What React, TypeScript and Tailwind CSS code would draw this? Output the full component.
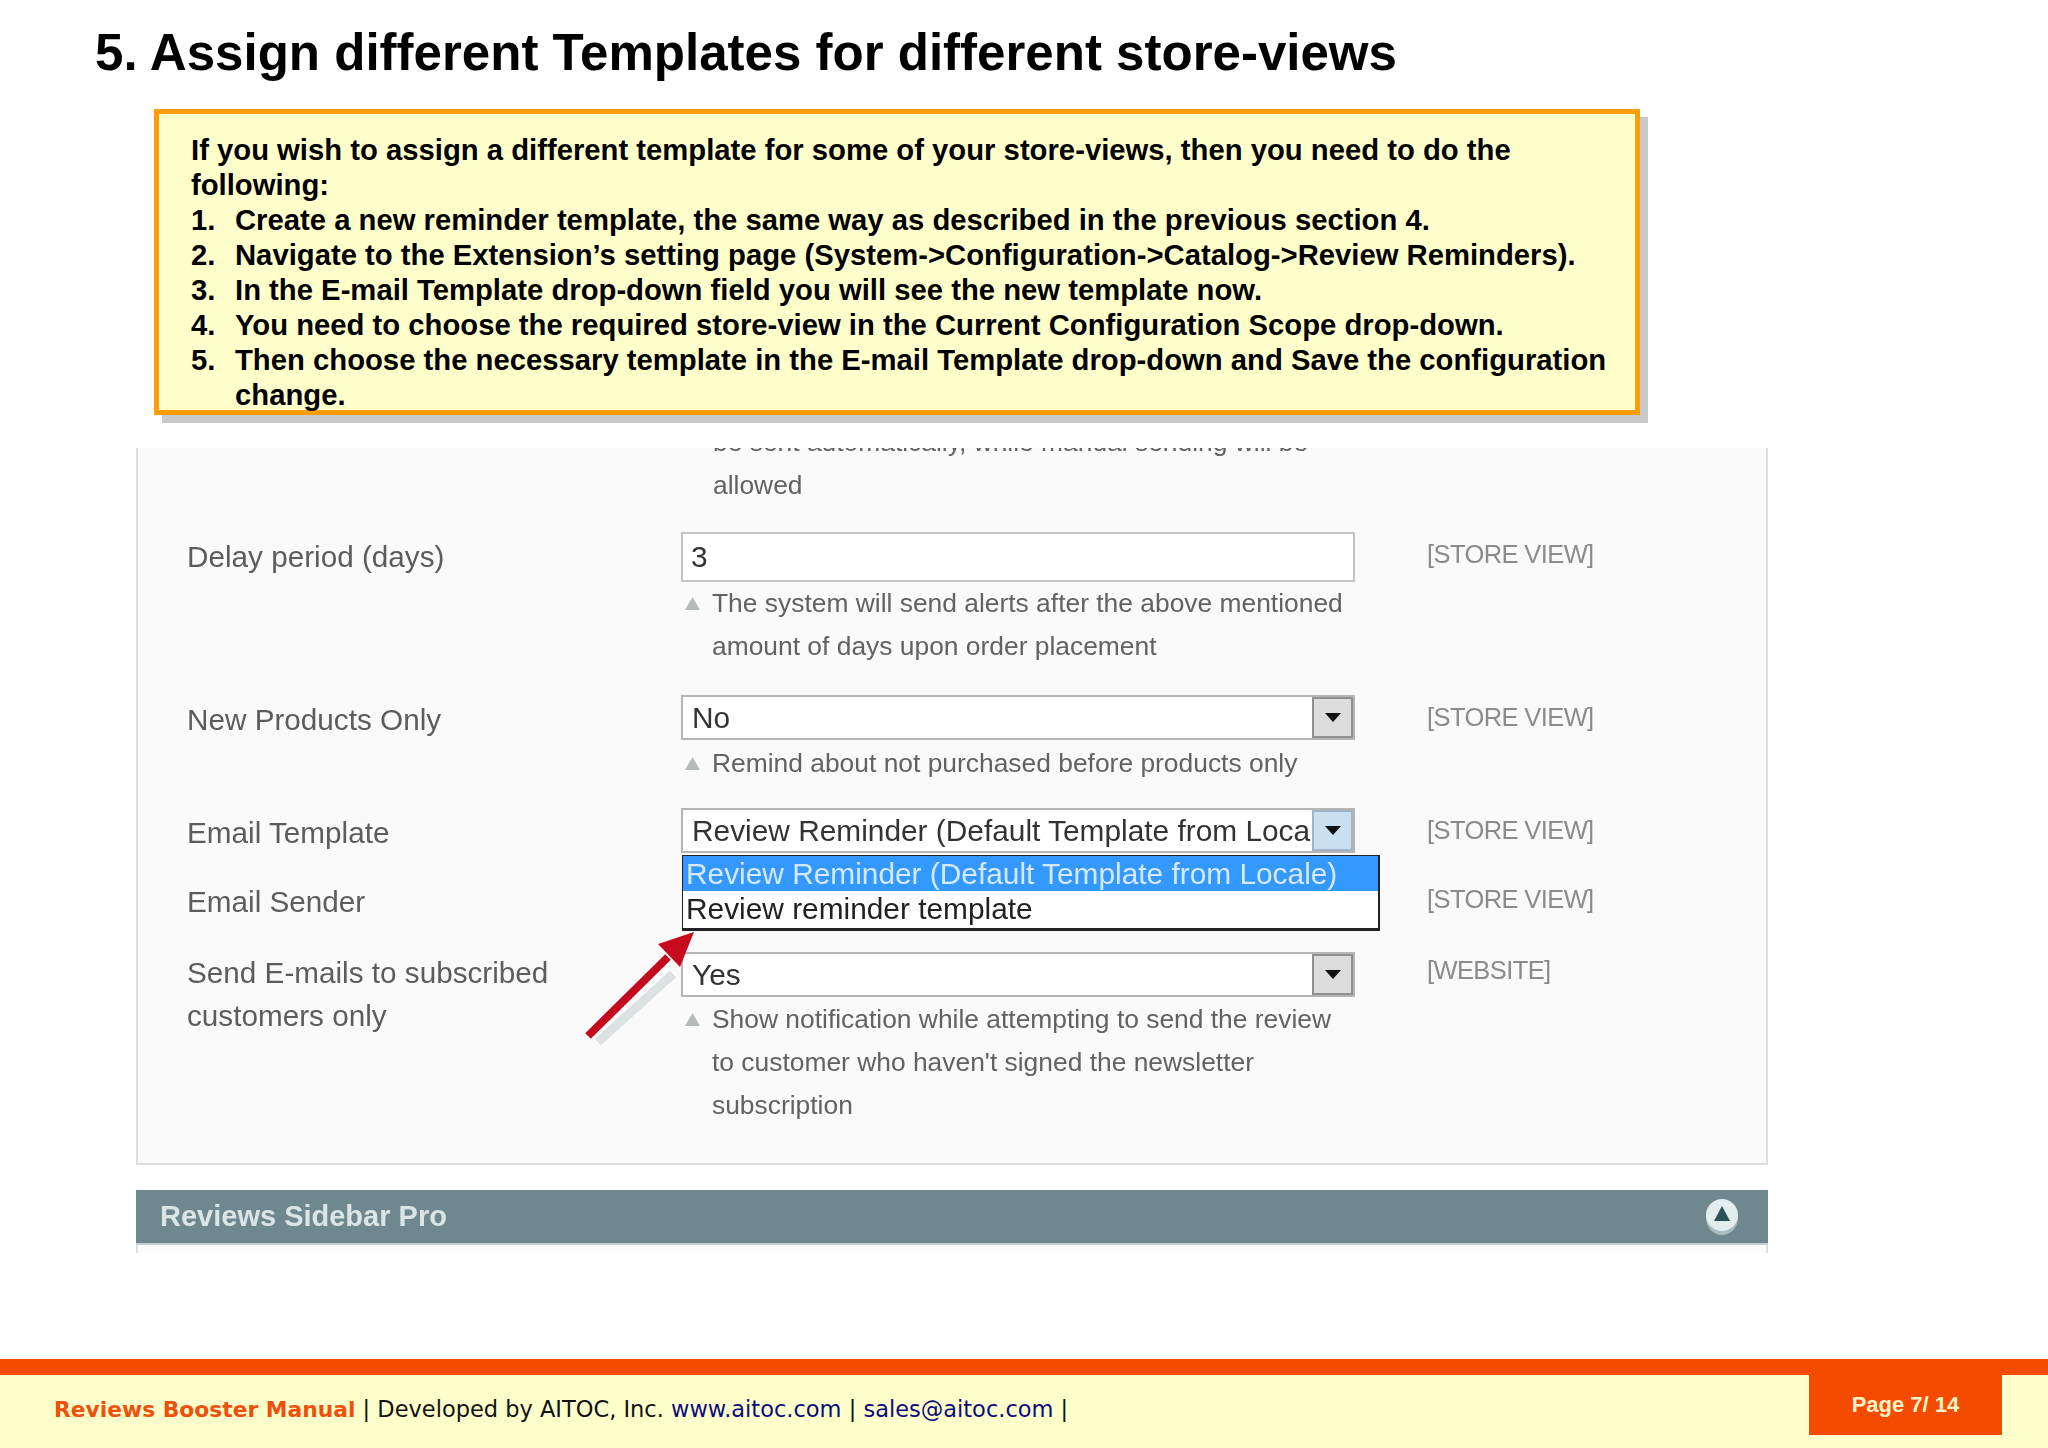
const steps = [
  ["Create a new reminder template, the same way as described in the previous section 4."],
  ["Navigate to the Extension’s setting page (System->Configuration->Catalog->Review Reminders)."],
  ["In the E-mail Template drop-down field you will see the new template now."],
  ["You need to choose the required store-view in the Current Configuration Scope drop-down."],
  ["Then choose the necessary template in the E-mail Template drop-down and Save the configuration", "change."],
];

function Note({ lines, top }: { lines: string[]; top: string }) {
  return (
    <div className={`flex ${top}`}>
      <svg className="mt-[15px] mr-[12px] ml-[4px] h-[13px] w-[15px] shrink-0" viewBox="0 0 15 13" aria-hidden>
        <path d="M7.5 0L15 13H0z" fill="#b4bcbc" />
      </svg>
      <div className="text-[26.4px] leading-[43px] text-[#626262]">
        {lines.map((l) => (
          <div key={l} className="whitespace-nowrap">{l}</div>
        ))}
      </div>
    </div>
  );
}

function Select({ value, focused }: { value: string; focused?: boolean }) {
  return (
    <div className="flex h-[45px] w-[674px] items-center justify-between border-2 border-[#b5b5b5] bg-white">
      <span className="pt-[2px] pl-[9px] text-[29.85px] whitespace-nowrap text-[#333]">{value}</span>
      <span className={`flex h-full w-[41px] items-center justify-center border-2 ${focused ? "border-[#9fb4c6] bg-[#c9e0f2]" : "border-[#8f8f8f] bg-[#dcdcdc]"}`}>
        <svg className="h-[9px] w-[16px]" viewBox="0 0 16 9" aria-hidden>
          <path d="M0 0h16L8 9z" fill="#111" />
        </svg>
      </span>
    </div>
  );
}

function Row({ label, scope, top, children }: { label: string[]; scope: string; top: string; children?: React.ReactNode }) {
  return (
    <div className={`grid grid-cols-[494px_746px_1fr] ${top}`}>
      <div className="pt-[3px] text-[29.7px] leading-[43px] text-[#5c5c5c]">
        {label.map((l) => (
          <div key={l}>{l}</div>
        ))}
      </div>
      <div>{children}</div>
      <div className="pt-[3px] text-[25.5px] leading-[38px] tracking-[-0.6px] text-[#8b8b8b]">{scope}</div>
    </div>
  );
}

export default function App() {
  return (
    <div className="flex h-[1448px] w-[2048px] flex-col overflow-hidden bg-white font-['Liberation_Sans',sans-serif] text-black">
      <h1 className="mt-[23px] ml-[95px] text-[51.05px] leading-[60px] font-bold">
        5. Assign different Templates for different store-views
      </h1>

      <div className="mt-[26px] ml-[154px] h-[306px] w-[1486px] border-[5px] border-[#ff9c0a] bg-[#ffffcc] pt-[19px] pl-[32px] text-[29.25px] leading-[35px] font-bold shadow-[8px_8px_0_#c9c9c9]">
        <p>If you wish to assign a different template for some of your store-views, then you need to do the</p>
        <p>following:</p>
        <ol>
          {steps.map((lines, i) => (
            <li key={lines[0]} className="flex">
              <span className="w-[44px] shrink-0">{i + 1}.</span>
              <span className="whitespace-nowrap">
                {lines.map((l) => (
                  <div key={l}>{l}</div>
                ))}
              </span>
            </li>
          ))}
        </ol>
      </div>

      <div className="relative mt-[33px] ml-[136px] w-[1632px]">
        <section className="h-[717px] border-2 border-t-0 border-[#dcdfe0] bg-[#fafafa] pl-[49px] blur-[0.4px]">
          <div className="ml-[526px] h-[14px] overflow-hidden">
            <div className="-mt-[27px] text-[26.4px] leading-[43px] whitespace-nowrap text-[#626262]">
              be sent automatically, while manual sending will be
            </div>
          </div>
          <div className="ml-[526px] pt-[2px] text-[26.4px] leading-[43px] text-[#626262]">allowed</div>

          <Row label={["Delay period (days)"]} scope="[STORE VIEW]" top="mt-[25px]">
            <div className="flex h-[50px] w-[674px] items-center border-2 border-[#c4c4c4] bg-white pl-[8px] text-[29.85px] text-[#333]">3</div>
            <Note top="mt-0" lines={["The system will send alerts after the above mentioned", "amount of days upon order placement"]} />
          </Row>

          <Row label={["New Products Only"]} scope="[STORE VIEW]" top="mt-[27px]">
            <Select value="No" />
            <Note top="mt-[2px]" lines={["Remind about not purchased before products only"]} />
          </Row>

          <Row label={["Email Template"]} scope="[STORE VIEW]" top="mt-[23px]">
            <Select value="Review Reminder (Default Template from Loca" focused />
          </Row>

          <Row label={["Email Sender"]} scope="[STORE VIEW]" top="mt-[23px]" />

          <Row label={["Send E-mails to subscribed", "customers only"]} scope="[WEBSITE]" top="mt-[25px]">
            <div className="mt-[4px]">
              <Select value="Yes" />
            </div>
            <Note top="mt-[1px]" lines={["Show notification while attempting to send the review", "to customer who haven't signed the newsletter", "subscription"]} />
          </Row>
        </section>

        <div className="mt-[25px] flex h-[55px] items-center justify-between border-b-2 border-[#c2cfd3] bg-[#6f878f] pr-[29px] pl-[24px] text-[29px] font-bold text-[#dbe5e6] blur-[0.4px]">
          <span>Reviews Sidebar Pro</span>
          <svg className="h-[38px] w-[34px]" viewBox="0 0 34 38" aria-hidden>
            <ellipse cx="17" cy="20" rx="16" ry="17" fill="#a9bcc0" />
            <circle cx="17" cy="17" r="16" fill="#e3edee" />
            <path d="M17 8l8 15H9z" fill="#2d5158" />
          </svg>
        </div>
        <div className="h-[8px] border-x-2 border-[#dcdfe0] bg-[#fdfdfd]" />

        {/* open drop-down list of the Email Template select */}
        <div className="absolute top-[407px] left-[546px] h-[76px] w-[698px] border border-r-2 border-b-[3px] border-[#222] bg-white text-[29.85px] leading-[36px] whitespace-nowrap blur-[0.4px]">
          <div className="h-[35px] bg-[#3399ff] pl-[3px] text-[#d6e8fb]">Review Reminder (Default Template from Locale)</div>
          <div className="pl-[3px] text-[#222]">Review reminder template</div>
        </div>

        {/* red callout arrow */}
        <svg className="absolute top-[480px] left-[440px] h-[125px] w-[130px] blur-[0.6px]" viewBox="0 0 130 125" aria-hidden>
          <path d="M22 114L97 46" stroke="#cfd6d6" strokeWidth="9" opacity="0.7" />
          <path d="M12 108L92 29" stroke="#c40a1e" strokeWidth="8" />
          <path d="M118 4L82 16L104 39z" fill="#c80a1e" />
        </svg>
      </div>

      <footer className="mt-auto">
        <div className="h-[16px] bg-[#f54b00]" />
        <div className="flex h-[73px] items-start justify-between bg-[#ffffcc] pr-[46px] pl-[54px]">
          <p className="mt-[18px] font-['DejaVu_Sans',sans-serif] text-[22.5px] leading-[32px] text-[#111]">
            <span className="text-[21.8px] font-bold text-[#f0500a]">Reviews Booster Manual</span> | Developed by AITOC, Inc.{" "}
            <span className="text-[#0b0b80]">www.aitoc.com</span> | <span className="text-[#0b0b80]">sales@aitoc.com</span> |
          </p>
          <div className="flex h-[60px] w-[193px] items-center justify-center bg-[#f54b00] pb-[2px] text-[22px] font-bold text-[#fff3c8]">
            Page 7/ 14
          </div>
        </div>
      </footer>
    </div>
  );
}
